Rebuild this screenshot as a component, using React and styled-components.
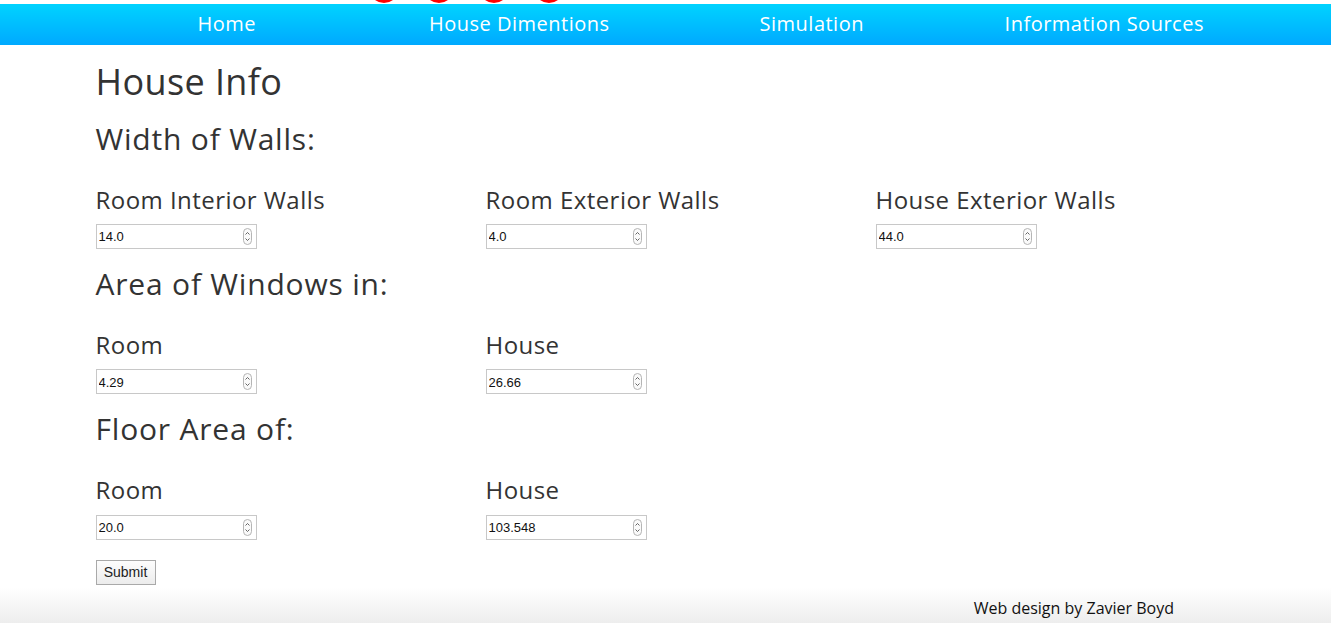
import React from 'react'
import styled, { createGlobalStyle } from 'styled-components'

const GlobalStyle = createGlobalStyle`
  html, body {
    margin: 0;
    padding: 0;
    background: #fff;
  }
  body {
    font-family: "Open Sans", "Noto Sans", sans-serif;
    color: #333;
  }
`

const Page = styled.div`
  position: relative;
  width: 1331px;
  min-height: 623px;
  padding-top: 4px;
  box-sizing: border-box;
  display: flex;
  flex-direction: column;
  overflow: hidden;
`

const Dot = styled.span`
  position: absolute;
  top: -27px;
  left: ${p => p.left}px;
  width: 30px;
  height: 30px;
  border-radius: 50%;
  background: #ff0000;
`

const Nav = styled.nav`
  height: 41px;
  background: linear-gradient(to bottom, #00d3ff, #00a9ff);
`

const NavList = styled.ul`
  width: 1170px;
  margin: 0 auto;
  padding: 0 0 3px;
  box-sizing: border-box;
  list-style: none;
  display: grid;
  grid-template-columns: repeat(4, 1fr);
  height: 100%;

  li {
    display: flex;
    align-items: center;
    justify-content: center;
  }

  a {
    color: #fff;
    text-decoration: none;
    font-size: 20px;
    font-weight: 500;
    letter-spacing: 0.5px;
  }
`

const Container = styled.main`
  width: 1170px;
  margin: 0 auto;
  padding: 0 15px;
  box-sizing: border-box;
  flex: 1;
`

const Title = styled.h1`
  font-size: 36px;
  font-weight: 400;
  line-height: 1.1;
  letter-spacing: 0.4px;
  margin: 17px 0 20px;
`

const SectionTitle = styled.h2`
  font-size: 30px;
  font-weight: 400;
  line-height: 1.1;
  letter-spacing: 0.8px;
  margin: 0 0 32px;
`

const Row = styled.div`
  display: grid;
  grid-template-columns: repeat(3, 1fr);
  margin: 0 -15px 18px;
`

const Field = styled.div`
  padding: 0 15px;
`

const Label = styled.h3`
  font-size: 24px;
  font-weight: 400;
  line-height: 1.1;
  letter-spacing: 0.45px;
  margin: 0 0 11px;
`

const InputWrap = styled.div`
  position: relative;
  width: 161px;
  height: 25px;
`

const Input = styled.input`
  width: 100%;
  height: 100%;
  box-sizing: border-box;
  border: 1px solid #c8c8c8;
  padding: 1px 22px 0 2px;
  font-family: "Liberation Sans", Arial, sans-serif;
  font-size: 13px;
  color: #111;
  outline: none;
`

const Spinner = styled.span`
  position: absolute;
  right: 5px;
  top: 4px;
  width: 9px;
  height: 17px;
  border: 1px solid #b5b5b5;
  border-radius: 5px;
  box-sizing: border-box;
  display: flex;
  flex-direction: column;
  align-items: center;
  justify-content: center;
  background: #fafafa;
`

const Submit = styled.button`
  margin-top: 2px;
  width: 60px;
  height: 25px;
  font-family: "Liberation Sans", Arial, sans-serif;
  font-size: 14px;
  color: #222;
  background: linear-gradient(to bottom, #fdfdfd, #ececec);
  border: 1px solid #a9a9a9;
  border-radius: 0;
  padding: 0;
`

const Footer = styled.footer`
  height: 36px;
  background: linear-gradient(to bottom, #fff, #ededed);
  display: flex;
  justify-content: flex-end;
  align-items: center;
  padding: 6px 157px 0 0;
  box-sizing: border-box;
  font-size: 16px;
  color: #111;
`

const Chevrons = () => (
  <svg width="5" height="11" viewBox="0 0 5 11" fill="none" stroke="#555" strokeWidth="0.9">
    <path d="M0.5 3.5 L2.5 1.5 L4.5 3.5" />
    <path d="M0.5 7.5 L2.5 9.5 L4.5 7.5" />
  </svg>
)

const NumberField = ({ label, value }) => (
  <Field>
    <Label>{label}</Label>
    <InputWrap>
      <Input type="text" defaultValue={value} />
      <Spinner><Chevrons /></Spinner>
    </InputWrap>
  </Field>
)

const sections = [
  {
    title: 'Width of Walls:',
    fields: [
      ['Room Interior Walls', '14.0'],
      ['Room Exterior Walls', '4.0'],
      ['House Exterior Walls', '44.0'],
    ],
  },
  {
    title: 'Area of Windows in:',
    fields: [
      ['Room', '4.29'],
      ['House', '26.66'],
    ],
  },
  {
    title: 'Floor Area of:',
    fields: [
      ['Room', '20.0'],
      ['House', '103.548'],
    ],
  },
]

export default function App() {
  return (
    <Page>
      <GlobalStyle />
      {[369, 424, 479, 534].map(x => <Dot key={x} left={x} />)}
      <Nav>
        <NavList>
          <li><a href="#">Home</a></li>
          <li><a href="#">House Dimentions</a></li>
          <li><a href="#">Simulation</a></li>
          <li><a href="#">Information Sources</a></li>
        </NavList>
      </Nav>
      <Container>
        <Title>House Info</Title>
        {sections.map(s => (
          <React.Fragment key={s.title}>
            <SectionTitle>{s.title}</SectionTitle>
            <Row>
              {s.fields.map(([label, value]) => (
                <NumberField key={label} label={label} value={value} />
              ))}
            </Row>
          </React.Fragment>
        ))}
        <Submit type="button">Submit</Submit>
      </Container>
      <Footer>Web design by Zavier Boyd</Footer>
    </Page>
  )
}
